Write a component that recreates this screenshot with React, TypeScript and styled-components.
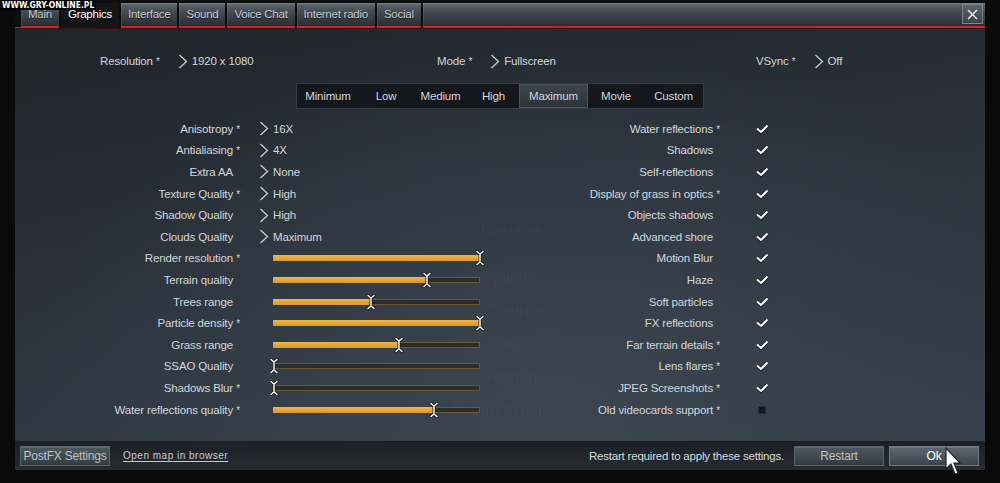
import React from "react";
import styled, { createGlobalStyle } from "styled-components";

const Global = createGlobalStyle`
  html, body { margin: 0; padding: 0; background: #0a0a0b; }
  body { font-family: "Liberation Sans", Arial, sans-serif; }
  * { box-sizing: border-box; }
`;

const Page = styled.div`
  position: relative;
  width: 1000px;
  height: 483px;
  background: #0a0a0b;
  overflow: hidden;
`;

const Watermark = styled.div`
  position: absolute;
  left: 0;
  top: 0;
  height: 10px;
  background: #000;
  color: #fff;
  font-family: "DejaVu Sans Condensed", "DejaVu Sans", sans-serif;
  font-size: 8.5px;
  font-weight: bold;
  line-height: 10px;
  padding: 0 2px;
  white-space: nowrap;
  z-index: 5;
`;

const Panel = styled.div`
  margin-left: 15px;
  width: 970px;
  height: 470px;
  display: flex;
  flex-direction: column;
`;

const TabBar = styled.div`
  height: 28px;
  padding-top: 3px;
  display: flex;
  gap: 2px;
  background: #0c0d0f;
  border-left: 6px solid transparent;
  border-image: linear-gradient(to bottom, #0c0d0f 26px, #c5262b 26px) 1;
`;

const Tab = styled.div<{ $active?: boolean; $grow?: boolean }>`
  height: 25px;
  display: flex;
  align-items: center;
  justify-content: ${(p) => (p.$grow ? "flex-end" : "center")};
  padding: ${(p) => (p.$grow ? "0 2px 1px 0" : "0 7px 1px")};
  font-size: 11.5px;
  letter-spacing: -0.25px;
  flex: ${(p) => (p.$grow ? "1" : "none")};
  color: ${(p) => (p.$active ? "#ffffff" : "#c6cbd0")};
  background: ${(p) =>
    p.$active
      ? "#121416"
      : "linear-gradient(#7a8288 0px, #596168 2px, #464d54 8px, #30363c 19px, #272c31 23px)"};
  border-bottom: ${(p) => (p.$active ? "2px solid #121416" : "2px solid #c5262b")};
  box-shadow: ${(p) => (p.$active ? "none" : "inset 1px 0 0 rgba(255,255,255,0.08)")};
  text-shadow: 0 1px 1px rgba(0, 0, 0, 0.6);
`;

const CloseButton = styled.div`
  width: 21px;
  height: 20px;
  border: 1px solid #7d858c;
  background: linear-gradient(#5d656c, #3b4248);
  display: flex;
  align-items: center;
  justify-content: center;
`;

const Body = styled.div`
  position: relative;
  flex: 1;
  background:
    radial-gradient(ellipse at 55% 95%, #3b4550 0%, rgba(59, 69, 80, 0) 70%),
    linear-gradient(170deg, #1f242a 0%, #2a3139 45%, #35404a 100%);
  border-top: 1px solid #3a1012;
  color: #d2d6da;
  font-size: 11.5px;
  letter-spacing: -0.15px;
  display: flex;
  flex-direction: column;
`;

const Ghost = styled.div`
  position: absolute;
  left: 0;
  top: 0;
  width: 100%;
  height: 100%;
  pointer-events: none;
`;

const GhostItem = styled.div<{ $x: number; $y: number }>`
  position: absolute;
  left: ${(p) => p.$x}px;
  top: ${(p) => p.$y}px;
  font-size: 16px;
  color: rgba(200, 210, 220, 0.045);
`;

const TopRow = styled.div`
  display: grid;
  grid-template-columns: 337px 319px auto;
  padding-left: 85px;
  margin-top: 23px;
  height: 18px;
  align-items: center;
`;

const Group = styled.div`
  display: flex;
  align-items: center;
`;

const ChevronWrap = styled.span<{ $gap: number }>`
  display: inline-flex;
  margin-left: ${(p) => p.$gap}px;
  margin-right: 4px;
`;

const PresetBar = styled.div`
  margin: 13px auto 0;
  width: 408px;
  height: 26px;
  display: flex;
  background: #14181c;
  border: 1px solid #343b42;
`;

const Preset = styled.div<{ $w: number; $on?: boolean }>`
  width: ${(p) => p.$w}px;
  display: flex;
  align-items: center;
  justify-content: center;
  color: #d2d6da;
  background: ${(p) => (p.$on ? "linear-gradient(#3e464e, #2b3238)" : "transparent")};
  box-shadow: ${(p) => (p.$on ? "inset 0 0 0 1px #4a535b" : "none")};
`;

const Columns = styled.div`
  margin-top: 9px;
  display: grid;
  grid-template-columns: 475px 1fr;
`;

const List = styled.div`
  display: grid;
  grid-auto-rows: 21.6px;
`;

const LeftRow = styled.div`
  display: grid;
  grid-template-columns: 225px 1fr;
  column-gap: 18px;
  align-items: center;
`;

const RightRow = styled.div`
  display: grid;
  grid-template-columns: 230px 1fr;
  column-gap: 35px;
  align-items: center;
`;

const Label = styled.div`
  text-align: right;
  white-space: nowrap;
`;

const Star = styled.span<{ $show: boolean }>`
  display: inline-block;
  width: 7px;
  text-align: right;
  font-size: 10px;
  visibility: ${(p) => (p.$show ? "visible" : "hidden")};
`;

const Value = styled.div`
  display: flex;
  align-items: center;
  padding-left: 1px;
`;

const Track = styled.div`
  position: relative;
  margin-left: 15px;
  width: 207px;
  height: 6px;
  background: #2c2c2a;
  border: 1px solid #6a5836;
`;

const Fill = styled.div`
  position: absolute;
  left: -1px;
  top: -1px;
  bottom: -1px;
  background: linear-gradient(#f0b545, #d89a2c);
`;

const Thumb = styled.div`
  position: absolute;
  top: -6px;
  margin-left: -5px;
  width: 10px;
  height: 16px;
`;

const CheckCell = styled.div`
  width: 14px;
  height: 12px;
  display: flex;
  align-items: center;
  justify-content: center;
`;

const EmptyBox = styled.div`
  width: 8px;
  height: 8px;
  background: #15181b;
  border: 1px solid #2a2e32;
`;

const Footer = styled.div`
  height: 29px;
  display: flex;
  align-items: center;
  padding: 0 6px 0 5px;
  background: linear-gradient(#1c2025, #262c32);
  color: #d0d4d8;
  font-size: 11.5px;
  letter-spacing: -0.2px;
`;

const Button = styled.div<{ $light?: boolean }>`
  width: 90px;
  height: 20px;
  display: flex;
  align-items: center;
  justify-content: center;
  border: 1px solid ${(p) => (p.$light ? "#6f7880" : "#5a636b")};
  background: ${(p) =>
    p.$light ? "linear-gradient(#5e676f, #3c444b)" : "linear-gradient(#4f5860, #343b42)"};
  color: ${(p) => (p.$light ? "#ffffff" : "#bcc1c6")};
  font-size: 12px;
  box-shadow: inset 0 1px 0 rgba(255, 255, 255, 0.12);
`;

const MapLink = styled.span`
  margin-left: 13px;
  font-size: 10px;
  letter-spacing: 0.5px;
  color: #c6cbd0;
  text-decoration: underline;
  text-underline-offset: 2px;
`;

const Spacer = styled.div`
  flex: 1;
`;

const Notice = styled.span`
  margin-right: 10px;
  color: #d6dadd;
`;

const ButtonGap = styled.div`
  width: 5px;
`;

const Cursor = styled.svg`
  position: absolute;
  left: 945px;
  top: 447px;
  z-index: 6;
`;

const Chevron = () => (
  <svg width="10" height="15" viewBox="0 0 10 15">
    <polyline points="1.5,1 8.5,7.5 1.5,14" fill="none" stroke="#c9cdd1" strokeWidth="1.3" />
  </svg>
);

const Check = () => (
  <svg width="14" height="12" viewBox="0 0 14 12">
    <polyline points="2,5.5 6,9 12.5,2.5" fill="none" stroke="#1a1d20" strokeWidth="3.6" />
    <polyline points="2,5.5 6,9 12.5,2.5" fill="none" stroke="#ffffff" strokeWidth="2" />
  </svg>
);

const ThumbIcon = () => (
  <svg width="10" height="16" viewBox="0 0 10 16">
    <g fill="none" strokeLinecap="round">
      <path d="M2 1.5 L5 4 L8 1.5 M5 4 L5 12 M2 14.5 L5 12 L8 14.5" stroke="#1c1f22" strokeWidth="3" />
      <path d="M2 1.5 L5 4 L8 1.5 M5 4 L5 12 M2 14.5 L5 12 L8 14.5" stroke="#ffffff" strokeWidth="1.4" />
    </g>
  </svg>
);

type LeftItem =
  | { label: string; star: boolean; kind: "select"; value: string }
  | { label: string; star: boolean; kind: "slider"; value: number };

const leftItems: LeftItem[] = [
  { label: "Anisotropy", star: true, kind: "select", value: "16X" },
  { label: "Antialiasing", star: true, kind: "select", value: "4X" },
  { label: "Extra AA", star: false, kind: "select", value: "None" },
  { label: "Texture Quality", star: true, kind: "select", value: "High" },
  { label: "Shadow Quality", star: false, kind: "select", value: "High" },
  { label: "Clouds Quality", star: false, kind: "select", value: "Maximum" },
  { label: "Render resolution", star: true, kind: "slider", value: 1 },
  { label: "Terrain quality", star: false, kind: "slider", value: 0.745 },
  { label: "Trees range", star: false, kind: "slider", value: 0.47 },
  { label: "Particle density", star: true, kind: "slider", value: 1 },
  { label: "Grass range", star: false, kind: "slider", value: 0.605 },
  { label: "SSAO Quality", star: false, kind: "slider", value: 0 },
  { label: "Shadows Blur", star: true, kind: "slider", value: 0 },
  { label: "Water reflections quality", star: true, kind: "slider", value: 0.778 },
];

const rightItems: { label: string; star: boolean; on: boolean }[] = [
  { label: "Water reflections", star: true, on: true },
  { label: "Shadows", star: false, on: true },
  { label: "Self-reflections", star: false, on: true },
  { label: "Display of grass in optics", star: true, on: true },
  { label: "Objects shadows", star: false, on: true },
  { label: "Advanced shore", star: false, on: true },
  { label: "Motion Blur", star: false, on: true },
  { label: "Haze", star: false, on: true },
  { label: "Soft particles", star: false, on: true },
  { label: "FX reflections", star: false, on: true },
  { label: "Far terrain details", star: true, on: true },
  { label: "Lens flares", star: true, on: true },
  { label: "JPEG Screenshots", star: true, on: true },
  { label: "Old videocards support", star: true, on: false },
];

const tabs = ["Main", "Graphics", "Interface", "Sound", "Voice Chat", "Internet radio", "Social"];

const presets: { name: string; w: number }[] = [
  { name: "Minimum", w: 62 },
  { name: "Low", w: 54 },
  { name: "Medium", w: 55 },
  { name: "High", w: 51 },
  { name: "Maximum", w: 69 },
  { name: "Movie", w: 56 },
  { name: "Custom", w: 59 },
];

const ghostItems: { t: string; x: number; y: number }[] = [
  { t: "Resume", x: 466, y: 193 },
  { t: "Options", x: 466, y: 240 },
  { t: "Controls", x: 471, y: 273 },
  { t: "Help", x: 477, y: 306 },
  { t: "Restart", x: 472, y: 340 },
  { t: "Return to hangar", x: 437, y: 373 },
];

export default function App() {
  return (
    <Page>
      <Global />
      <Watermark>WWW.GRY-ONLINE.PL</Watermark>
      <Panel>
        <TabBar>
          {tabs.map((t) => (
            <Tab key={t} $active={t === "Graphics"}>
              {t}
            </Tab>
          ))}
          <Tab $grow>
            <CloseButton>
              <svg width="11" height="11" viewBox="0 0 11 11">
                <path d="M1 1 L10 10 M10 1 L1 10" stroke="#e8eaec" strokeWidth="1.5" />
              </svg>
            </CloseButton>
          </Tab>
        </TabBar>
        <Body>
          <Ghost>
            {ghostItems.map((g) => (
              <GhostItem key={g.t} $x={g.x} $y={g.y}>
                {g.t}
              </GhostItem>
            ))}
          </Ghost>
          <TopRow>
            <Group>
              Resolution<Star $show>*</Star>
              <ChevronWrap $gap={18}>
                <Chevron />
              </ChevronWrap>
              1920 x 1080
            </Group>
            <Group>
              Mode<Star $show>*</Star>
              <ChevronWrap $gap={18}>
                <Chevron />
              </ChevronWrap>
              Fullscreen
            </Group>
            <Group>
              VSync<Star $show>*</Star>
              <ChevronWrap $gap={18}>
                <Chevron />
              </ChevronWrap>
              Off
            </Group>
          </TopRow>
          <PresetBar>
            {presets.map((p) => (
              <Preset key={p.name} $w={p.w} $on={p.name === "Maximum"}>
                {p.name}
              </Preset>
            ))}
          </PresetBar>
          <Columns>
            <List>
              {leftItems.map((it) => (
                <LeftRow key={it.label}>
                  <Label>
                    {it.label}
                    <Star $show={it.star}>*</Star>
                  </Label>
                  {it.kind === "select" ? (
                    <Value>
                      <ChevronWrap $gap={0}>
                        <Chevron />
                      </ChevronWrap>
                      {it.value}
                    </Value>
                  ) : (
                    <Track>
                      <Fill style={{ width: `${it.value * 207}px` }} />
                      <Thumb style={{ left: `${it.value * 206}px` }}>
                        <ThumbIcon />
                      </Thumb>
                    </Track>
                  )}
                </LeftRow>
              ))}
            </List>
            <List>
              {rightItems.map((it) => (
                <RightRow key={it.label}>
                  <Label>
                    {it.label}
                    <Star $show={it.star}>*</Star>
                  </Label>
                  <CheckCell>{it.on ? <Check /> : <EmptyBox />}</CheckCell>
                </RightRow>
              ))}
            </List>
          </Columns>
        </Body>
        <Footer>
          <Button>PostFX Settings</Button>
          <MapLink>Open map in browser</MapLink>
          <Spacer />
          <Notice>Restart required to apply these settings.</Notice>
          <Button>Restart</Button>
          <ButtonGap />
          <Button $light>Ok</Button>
        </Footer>
      </Panel>
      <Cursor width="16" height="28" viewBox="0 0 16 28">
        <path d="M1 1 L1 22 L6 17 L10 27 L13 26 L9 16 L15 16 Z" fill="#ffffff" stroke="#202326" strokeWidth="1.2" />
      </Cursor>
    </Page>
  );
}
